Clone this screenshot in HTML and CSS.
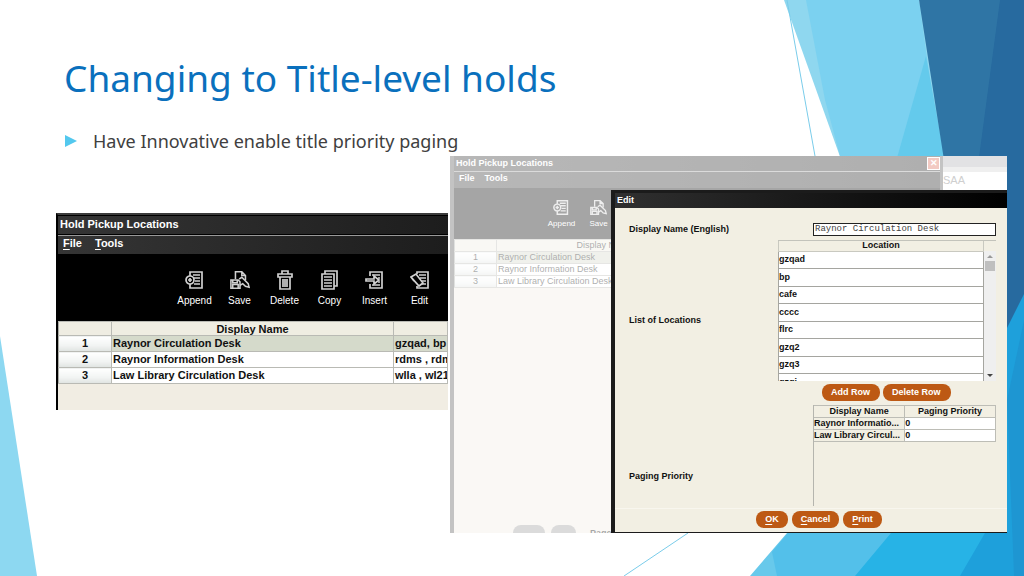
FILE: index.html
```html
<!DOCTYPE html>
<html lang="en">
<head>
    <meta charset="UTF-8">
    <meta name="viewport" content="width=device-width, initial-scale=1.0">
    <title>Changing to Title-level holds</title>
    <link rel="stylesheet" href="styles.css">
</head>
<body>

    <!-- Icon set for the toolbars -->
    <svg class="sprite" aria-hidden="true">
        <symbol id="i-append" viewBox="0 0 20 20">
            <path d="M5 6V2h12v16H5v-4M8 5h7M9 8h6M10 11h5M9 14h6"/>
            <circle cx="5" cy="10" r="4"/>
            <path d="M5 8v4M3 10h4"/>
        </symbol>
        <symbol id="i-save" viewBox="0 0 22 20">
            <path d="M6 9V1h7l4 4v5M13 1v4h4"/>
            <path d="M1 10h8l2 2v7H1zM3 10v3h5v-3M3 19v-4h6v4"/>
            <path d="M10 9l3-2 7 7 1 4-4-1-3-3-3 2"/>
        </symbol>
        <symbol id="i-delete" viewBox="0 0 20 20">
            <path d="M3 4h14v3H3zM7 4V1h6v3M5 7v12h10V7M8 9v8M10 9v8M12 9v8"/>
        </symbol>
        <symbol id="i-copy" viewBox="0 0 20 20">
            <path d="M2 4h12v15H2zM5 4V1h12v15h-3M4 7h8M4 10h8M4 13h8M4 16h8"/>
        </symbol>
        <symbol id="i-insert" viewBox="0 0 20 20">
            <path d="M5 6V2h12v16H5v-4M7 5h8M13 8h2M13 12h2M7 15h8"/>
            <path d="M1 9h8V6l5 4-5 4v-3H1z"/>
        </symbol>
        <symbol id="i-edit" viewBox="0 0 20 20">
            <path d="M7 4V2h11v16H7v-2M9 5h7M10 8h6M12 11h4M12 14h4"/>
            <path d="M1 7l5-3 7 9-4 3zM1 7l3 4"/>
        </symbol>
    </svg>

    <main class="slide">

        <!-- Facet background -->
        <svg class="facets" viewBox="0 0 1024 576" preserveAspectRatio="none" aria-hidden="true">
            <polygon points="784,0 919,0 1024,420 1024,576 990,576" fill="#8fd7ef"/>
            <polygon points="806,0 919,0 960,300 900,330 840,156 825,100" fill="#7bd1f0"/>
            <polygon points="926,56 945,160 945,200 885,200" fill="#64caec"/>
            <polygon points="919,0 1024,0 1024,400 965,300 944,160" fill="#2f75a5"/>
            <polygon points="1000,0 1024,0 1024,400 960,300" fill="#276a9f"/>
            <polygon points="750,576 787,533 960,330 1007,576" fill="#68c9eb"/>
            <polygon points="777,576 772,552 788,533 960,330 1007,576" fill="#53c0ea"/>
            <polygon points="855,576 891,533 1007,380 1024,576" fill="#27b3e6"/>
            <polygon points="960,576 985,533 1007,328 1024,294 1024,576" fill="#1ea0db"/>
            <polygon points="1007,400 1024,320 1024,576 1014,576" fill="#1e96d2"/>
            <polygon points="0,336 37,576 0,576" fill="#8dd8f1"/>
            <path d="M787 0L815 156M688 533L624 576" stroke="#7accea" fill="none"/>
        </svg>

        <h1>Changing to Title-level holds</h1>
        <ul class="points">
            <li>Have Innovative enable title priority paging</li>
        </ul>

        <div class="shots">

            <!-- Pickup locations window -->
            <section class="window">
                <div class="titlebar">Hold Pickup Locations</div>
                <div class="menubar">
                    <button type="button"><u>F</u>ile</button>
                    <button type="button"><u>T</u>ools</button>
                </div>
                <div class="toolbar">
                    <button type="button"><svg><use href="#i-append"/></svg>Append</button>
                    <button type="button"><svg><use href="#i-save"/></svg>Save</button>
                    <button type="button"><svg><use href="#i-delete"/></svg>Delete</button>
                    <button type="button"><svg><use href="#i-copy"/></svg>Copy</button>
                    <button type="button"><svg><use href="#i-insert"/></svg>Insert</button>
                    <button type="button"><svg><use href="#i-edit"/></svg>Edit</button>
                </div>
                <table class="pickups">
                    <thead>
                        <tr><th class="num"></th><th class="name">Display Name</th><th></th></tr>
                    </thead>
                    <tbody>
                        <tr class="selected"><th>1</th><td>Raynor Circulation Desk</td><td>gzqad, bp</td></tr>
                        <tr><th>2</th><td>Raynor Information Desk</td><td>rdms , rdms</td></tr>
                        <tr><th>3</th><td>Law Library Circulation Desk</td><td>wlla , wl210</td></tr>
                    </tbody>
                </table>
            </section>

            <!-- Same window, greyed out behind the edit dialog -->
            <div class="desktop">
                <div class="behind"><span>SAA</span></div>
                <section class="window faded">
                    <div class="titlebar">Hold Pickup Locations <span class="close">&#10005;</span></div>
                    <div class="menubar">
                        <button type="button">File</button>
                        <button type="button">Tools</button>
                    </div>
                    <div class="toolbar">
                        <button type="button"><svg><use href="#i-append"/></svg>Append</button>
                        <button type="button"><svg><use href="#i-save"/></svg>Save</button>
                    </div>
                    <table class="pickups">
                        <thead>
                            <tr><th class="num"></th><th class="name">Display Name</th><th></th></tr>
                        </thead>
                        <tbody>
                            <tr class="selected"><th>1</th><td>Raynor Circulation Desk</td><td></td></tr>
                            <tr><th>2</th><td>Raynor Information Desk</td><td></td></tr>
                            <tr><th>3</th><td>Law Library Circulation Desk</td><td></td></tr>
                        </tbody>
                    </table>
                    <div class="pager"><i></i><i></i><span>Page</span></div>
                </section>

                <form class="dialog">
                    <div class="dialog-title">Edit</div>
                    <div class="fields">
                        <label for="display-name">Display Name (English)</label>
                        <input type="text" id="display-name" value="Raynor Circulation Desk">

                        <div class="label">List of Locations</div>
                        <div>
                            <div class="list">
                                <table class="locations">
                                    <thead><tr><th>Location</th></tr></thead>
                                    <tbody>
                                        <tr><td>gzqad</td></tr>
                                        <tr><td>bp</td></tr>
                                        <tr><td>cafe</td></tr>
                                        <tr><td>cccc</td></tr>
                                        <tr><td>flrc</td></tr>
                                        <tr><td>gzq2</td></tr>
                                        <tr><td>gzq3</td></tr>
                                        <tr><td>gzqi</td></tr>
                                    </tbody>
                                </table>
                                <div class="scrollbar"><i class="up"></i><i class="thumb"></i><i class="down"></i></div>
                            </div>
                            <div class="row-buttons">
                                <button type="button" class="pill">Add Row</button>
                                <button type="button" class="pill">Delete Row</button>
                            </div>
                        </div>

                        <div class="label low">Paging Priority</div>
                        <div class="priority-box">
                            <table class="priority">
                                <thead><tr><th>Display Name</th><th>Paging Priority</th></tr></thead>
                                <tbody>
                                    <tr><th>Raynor Informatio...</th><td>0</td></tr>
                                    <tr><th>Law Library Circul...</th><td>0</td></tr>
                                </tbody>
                            </table>
                        </div>
                    </div>
                    <div class="actions">
                        <button type="button" class="pill"><u>O</u>K</button>
                        <button type="button" class="pill"><u>C</u>ancel</button>
                        <button type="button" class="pill"><u>P</u>rint</button>
                    </div>
                </form>
            </div>
        </div>
    </main>

</body>
</html>
```

FILE: styles.css
```css
* {
    box-sizing: border-box;
}
body {
    margin: 0;
    background-color: white;
    font-family: "Liberation Sans", Arial, sans-serif;
}
button {
    margin: 0;
    padding: 0;
    border: 0;
    background: none;
    color: inherit;
    font: inherit;
}
table {
    width: 100%;
    border-collapse: collapse;
    table-layout: fixed;
}
th, td {
    padding: 0 1px;
    overflow: hidden;
    white-space: nowrap;
    text-align: left;
}
.sprite {
    display: none;
}

/* Slide */
.slide {
    position: relative;
    min-height: 100vh;
    padding: 52px 17px 43px 56px;
    overflow: hidden;
}
.facets {
    position: absolute;
    top: 0;
    left: 0;
    width: 100%;
    height: 100%;
    z-index: -1;
}
h1 {
    margin: 0;
    padding-left: 8px;
    color: #0a70bd;
    font-family: "Trebuchet MS", "Noto Sans", sans-serif;
    font-size: 37px;
    font-weight: 400;
    line-height: 52px;
}
.points {
    margin: 25px 0 0;
    padding: 0 0 0 9px;
    list-style: none;
    color: #404040;
    font-family: "Trebuchet MS", "Noto Sans", sans-serif;
    font-size: 18px;
    line-height: 24px;
}
.points li {
    display: flex;
    align-items: center;
    gap: 16px;
}
.points li::before {
    content: "";
    border: 6px solid transparent;
    border-left: 12px solid #53c8ee;
    border-right: 0;
}
.shots {
    display: grid;
    grid-template-columns: 392fr 557fr;
    gap: 2px;
    align-items: start;
    margin-top: 3px;
}

/* Window */
.window {
    margin-top: 57px;
    min-height: 197px;
    overflow: hidden;
    background-color: #f1ede3;
    border-top: 2px solid #3c3c3c;
    border-left: 2px solid black;
    font-size: 11px;
}
.titlebar {
    height: 20px;
    padding-left: 2px;
    border: solid black;
    border-width: 1px 0;
    background: linear-gradient(to right, #353535, #1d1d1d);
    color: white;
    font-weight: 700;
    line-height: 17px;
}
.menubar {
    display: flex;
    align-items: flex-start;
    gap: 13px;
    height: 19px;
    padding-left: 5px;
    border-top: 1px solid #999;
    background: linear-gradient(to right, #353535, #1d1d1d);
    color: white;
    font-weight: 700;
    line-height: 15px;
}
u {
    text-underline-offset: 2px;
}
.toolbar {
    display: flex;
    justify-content: flex-end;
    height: 67px;
    padding: 16px 6px 0 0;
    background-color: black;
    color: white;
    font-size: 10px;
}
.toolbar button {
    display: flex;
    flex-direction: column;
    align-items: center;
    gap: 4px;
    width: 45px;
    height: 38px;
    line-height: 14px;
}
.toolbar svg {
    width: 20px;
    height: 20px;
    fill: none;
    stroke: #d0d0d0;
    stroke-width: 1.7;
}
.pickups {
    color: #111;
    font-weight: 700;
    line-height: 12px;
}
.pickups tr {
    height: 16px;
}
.pickups thead tr {
    height: 14px;
    background-color: #efede2;
}
.pickups thead th {
    text-align: center;
    line-height: 12px;
}
.pickups .num {
    width: 53px;
}
.pickups .name {
    width: 282px;
}
.pickups th, .pickups td {
    border: 1px solid #b9bab4;
    border-left-color: #a9aaa4;
}
.pickups tbody th, .pickups tbody td {
    padding-bottom: 2px;
}
.pickups td {
    background-color: white;
}
.pickups tbody th {
    background: linear-gradient(white, #f2f4f3 60%, #dfe3e1);
    text-align: center;
}
.pickups .selected td {
    background-color: #d5dacb;
}

/* Greyed window with the dialog on top */
.desktop {
    position: relative;
    height: 377px;
    overflow: hidden;
    background-color: white;
}
.behind {
    position: absolute;
    top: 0;
    right: 0;
    width: 64px;
    height: 34px;
    padding-top: 17px;
    background: linear-gradient(#e2e2e4 11px, #efefef 11px 16px, white 16px);
    color: #cfcfcf;
    font-size: 11px;
    line-height: 14px;
}
.faded {
    display: flex;
    flex-direction: column;
    height: 377px;
    margin: 0 64px 0 0;
    border: solid #555;
    border-width: 0 3px 0 4px;
    opacity: .35;
    font-size: 9px;
}
.faded .titlebar {
    display: flex;
    justify-content: space-between;
    flex: none;
    height: 15px;
    border: 0;
    line-height: 14px;
}
.faded .close {
    width: 13px;
    height: 13px;
    margin-top: 1px;
    border: 1px solid white;
    background-color: #dc6a55;
    font-size: 9px;
    line-height: 11px;
    text-align: center;
}
.faded .menubar {
    flex: none;
    gap: 10px;
    height: 17px;
    line-height: 13px;
}
.faded .toolbar {
    flex: none;
    justify-content: flex-start;
    height: 51px;
    padding: 11px 0 0 89px;
    font-size: 8px;
}
.faded .toolbar button {
    gap: 3px;
    width: 37px;
    height: 30px;
    line-height: 10px;
}
.faded .toolbar svg {
    width: 17px;
    height: 17px;
}
.faded .pickups {
    color: #111;
    line-height: 11px;
}
.faded .pickups thead tr, .faded .pickups tr {
    height: 12px;
}
.faded .pickups th, .faded .pickups td {
    padding-bottom: 0;
    font-weight: 400;
    line-height: 11px;
}
.faded .pickups .num {
    width: 42px;
}
.faded .pickups .name {
    width: 216px;
}
.pager {
    display: flex;
    gap: 6px;
    height: 8px;
    margin-top: auto;
    padding-left: 59px;
    font-weight: 700;
    line-height: 16px;
}
.pager i {
    width: 32px;
    border-radius: 8px 8px 0 0;
    background-color: #999;
}
.pager i + i {
    width: 25px;
    margin-right: 8px;
}

/* Edit dialog */
.dialog {
    position: absolute;
    top: 34px;
    right: 0;
    bottom: 0;
    width: 396px;
    border: solid #1b1b1b;
    border-width: 3px 0 1px 4px;
    background-color: #f2efe3;
    color: #111;
    font-size: 9px;
    font-weight: 700;
    line-height: 11px;
}
.dialog-title {
    height: 15px;
    padding-left: 2px;
    background: linear-gradient(to right, #303030, #000);
    color: white;
    line-height: 14px;
}
.fields {
    display: grid;
    grid-template-columns: 1fr 218px;
    grid-template-rows: 13px 161px 101px;
    row-gap: 4px;
    align-items: center;
    padding: 15px 11px 0 14px;
}
.fields input {
    justify-self: end;
    width: 183px;
    height: 13px;
    padding: 0 1px 2px;
    border: 1px solid #222;
    border-radius: 0;
    background-color: white;
    color: #444;
    font-family: "Liberation Mono", "Courier New", monospace;
    font-size: 9px;
}
.low {
    align-self: end;
    padding-bottom: 24px;
}
.list {
    display: flex;
    height: 141px;
    overflow: hidden;
    border-top: 1px solid #c3c3bb;
}
.locations {
    flex: 1;
    height: 0;
}
.locations th {
    height: 10px;
    border: 1px solid #c9c9c0;
    border-top: 0;
    text-align: center;
    line-height: 9px;
}
.locations td {
    height: 17px;
    padding: 0;
    border: 1px solid #a5a5a0;
    background-color: white;
    line-height: 15px;
}
.locations tr:nth-child(even) td {
    height: 18px;
}
.scrollbar {
    display: flex;
    flex-direction: column;
    align-items: center;
    width: 12px;
    margin-top: 10px;
    padding: 4px 0 4px;
    background-color: #efefef;
}
.up, .down {
    border: 3px solid transparent;
    border-top: 0;
    border-bottom-color: #999;
}
.thumb {
    width: 10px;
    height: 10px;
    margin-top: 3px;
    background-color: #bfbfbf;
}
.down {
    margin-top: auto;
    border-top: 3px solid #444;
    border-bottom: 0;
}
.row-buttons {
    display: flex;
    gap: 3px;
    margin-top: 3px;
    padding-left: 44px;
}
.pill {
    height: 17px;
    padding: 0 9px 1px;
    border-radius: 8px;
    background-color: #bd5914;
    color: white;
}
.row-buttons .pill {
    padding-right: 10px;
}
.priority-box {
    justify-self: end;
    width: 183px;
    height: 101px;
    border-left: 1px solid #b5b5ae;
}
.priority th, .priority td {
    height: 12px;
    padding: 0;
    border: 1px solid #bdbdb6;
    border-left-width: 0;
    line-height: 11px;
}
.priority thead th {
    text-align: center;
}
.priority td {
    background-color: white;
}
.actions {
    display: flex;
    justify-content: center;
    gap: 4px;
    margin-top: 2px;
    padding: 2px 0 0 16px;
    border-top: 1px solid #f8f6ee;
}
```
